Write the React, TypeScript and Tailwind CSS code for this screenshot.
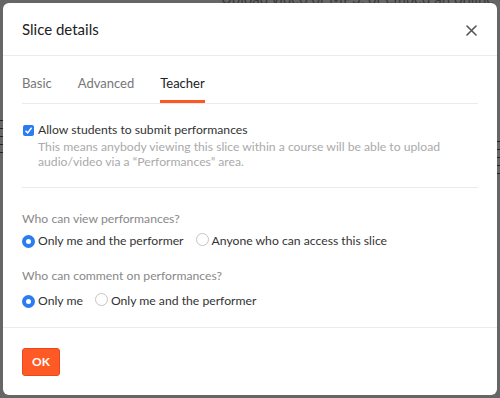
import React from "react";

const font = { fontFamily: "Lato, 'Open Sans', Arial, sans-serif" };

function Radio({ checked }: { checked: boolean }) {
  return checked ? (
    <span className="inline-flex h-[13px] w-[13px] shrink-0 items-center justify-center rounded-full bg-[#2a7cf0]">
      <span className="h-[5px] w-[5px] rounded-full bg-white" />
    </span>
  ) : (
    <span className="inline-block h-[13px] w-[13px] shrink-0 rounded-full border border-[#c4c4c4] bg-white" />
  );
}

export default function App() {
  return (
    <div className="relative h-[398px] w-[500px] overflow-hidden bg-[#666666]" style={font}>
      <div className="absolute left-[221px] top-[-13px] whitespace-nowrap text-[15px] text-[#3a3a3a]">
        Upload video or MP3, or embed an online video.
      </div>
      <div className="absolute left-0 top-[120px] flex flex-col gap-[7px]">
        <div className="h-px w-[3px] bg-[#222]" />
        <div className="h-px w-[3px] bg-[#222]" />
        <div className="h-px w-[3px] bg-[#222]" />
        <div className="h-px w-[3px] bg-[#222]" />
        <div className="h-px w-[3px] bg-[#222]" />
      </div>
      <div className="absolute right-0 top-[141px] flex flex-col gap-[7px]">
        <div className="h-px w-[3px] bg-[#222]" />
        <div className="h-px w-[3px] bg-[#222]" />
        <div className="h-px w-[3px] bg-[#222]" />
        <div className="h-px w-[3px] bg-[#222]" />
        <div className="h-px w-[3px] bg-[#222]" />
      </div>
      <div className="relative ml-[3px] mt-[3px] flex h-[392px] w-[494px] flex-col rounded-[6px] bg-white">
        <div className="flex h-[53px] items-center justify-between border-b border-[#ebebeb] pl-[19px] pr-[20px]">
          <div className="text-[15px] text-[#222]">Slice details</div>
          <svg width="11" height="11" viewBox="0 0 11 11" className="mt-[3px]">
            <path d="M1 1L10 10M10 1L1 10" stroke="#555" strokeWidth="1.6" strokeLinecap="round" />
          </svg>
        </div>
        <div className="px-[19px]">
          <div className="mt-[16px] flex gap-[26px] border-b border-[#ebebeb] text-[13px]">
            <div className="pb-[9px] pt-[2px] text-[#777]">Basic</div>
            <div className="pb-[9px] pt-[2px] text-[#777]">Advanced</div>
            <div className="border-b-[3px] border-[#ff5722] pb-[6px] pt-[2px] text-[#222]">Teacher</div>
          </div>
          <div className="mt-[18px] flex items-start gap-[4px]">
            <span className="mt-[3px] ml-[1px] inline-flex h-[11px] w-[11px] shrink-0 items-center justify-center rounded-[2px] bg-[#2a7cf0]">
              <svg width="9" height="9" viewBox="0 0 9 9">
                <path d="M1.5 4.8L3.6 6.9L7.6 1.8" fill="none" stroke="white" strokeWidth="1.5" />
              </svg>
            </span>
            <div>
              <div className="text-[12.2px] leading-[16px] text-[#333]">Allow students to submit performances</div>
              <div className="mt-[1px] text-[12.2px] leading-[15px] text-[#aaaaaa]">
                This means anybody viewing this slice within a course will be able to upload
                <br />
                audio/video via a “Performances” area.
              </div>
            </div>
          </div>
          <div className="mt-[18px] h-px bg-[#ebebeb]" />
          <div className="mt-[23px] text-[12.2px] leading-[16px] text-[#888]">Who can view performances?</div>
          <div className="mt-[6px] flex items-center text-[12.2px] leading-[16px] text-[#333]">
            <Radio checked />
            <span className="ml-[3px]">Only me and the performer</span>
            <span className="ml-[12px]"><Radio checked={false} /></span>
            <span className="ml-[3px]">Anyone who can access this slice</span>
          </div>
          <div className="mt-[18px] text-[12.2px] leading-[16px] text-[#888]">Who can comment on performances?</div>
          <div className="mt-[9px] flex items-center text-[12.2px] leading-[16px] text-[#333]">
            <Radio checked />
            <span className="ml-[3px]">Only me</span>
            <span className="ml-[12px]"><Radio checked={false} /></span>
            <span className="ml-[3px]">Only me and the performer</span>
          </div>
        </div>
        <div className="mt-auto h-[68px] border-t border-[#ebebeb] pl-[19px] pt-[20px]">
          <button className="flex h-[28px] w-[38px] items-center justify-center rounded-[3px] border border-[#e8491c] bg-[#ff5a26] text-[12px] font-bold text-white">
            OK
          </button>
        </div>
      </div>
    </div>
  );
}
